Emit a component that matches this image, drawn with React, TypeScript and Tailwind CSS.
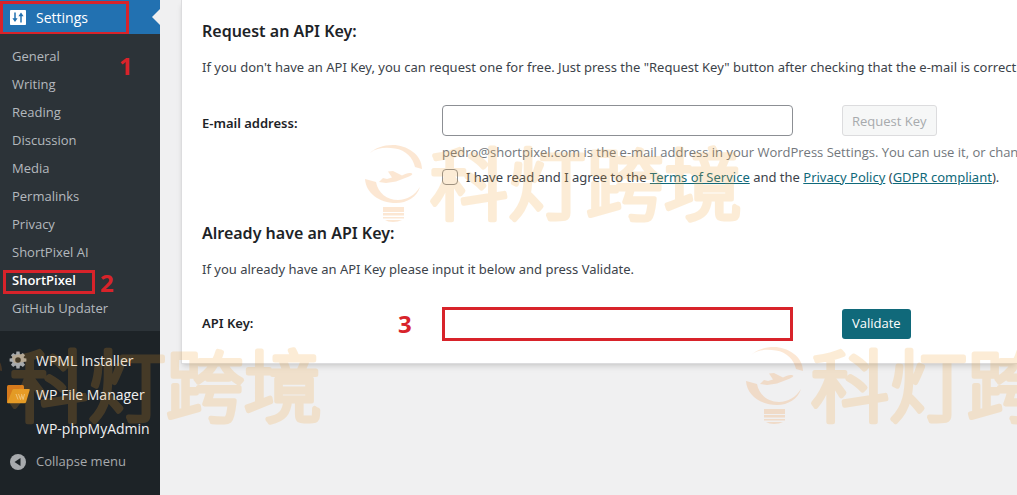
import React from "react";

const submenu = [
  "General",
  "Writing",
  "Reading",
  "Discussion",
  "Media",
  "Permalinks",
  "Privacy",
  "ShortPixel AI",
  "ShortPixel",
  "GitHub Updater",
];

function SlidersIcon() {
  return (
    <svg viewBox="0 0 16 15" className="h-[15px] w-4" aria-hidden="true">
      <rect width="16" height="15" rx="0.8" fill="#fff" />
      <path d="M5 2.500v8M11 12.500v-8" stroke="#2271b1" strokeWidth="1.500" />
      <path d="M2.400 8.200h5.200L5 12zM8.400 6.200h5.200L11 2.500z" fill="#2271b1" />
    </svg>
  );
}

function GearIcon() {
  const teeth = [0, 45, 90, 135, 180, 225, 270, 315];
  return (
    <svg viewBox="0 0 18 18" className="h-[18px] w-[18px]" aria-hidden="true">
      <g fill="#a7aaad">
        {teeth.map((angle) => (
          <path key={angle} d="M7.400 0.600h3.200l0.400 3.400h-4z" transform={`rotate(${angle} 9 9)`} />
        ))}
      </g>
      <circle cx="9" cy="9" r="4.500" fill="none" stroke="#a7aaad" strokeWidth="3.400" />
    </svg>
  );
}

function FolderIcon() {
  return (
    <svg viewBox="0 0 24 20" className="h-5 w-6" aria-hidden="true">
      <path d="M1 2.500Q1 1 2.500 1h14q1.500 0 1.500 1.500V14L2 19.300Q1 19.300 1 18z" fill="#d67a1c" />
      <path d="M8 5h15q1 0 .7 1l-3.600 12q-.4 1.300-1.700 1.300H2.500q-1.500 0-1-1.300L6.300 6.200Q6.700 5 8 5z" fill="#e39b25" />
      <path d="M10 10l2 5.500M12.500 10l2 5.500 1-4M15.500 10l1.600 5.500 1.400-5.500" fill="none" stroke="#f0cf90" strokeWidth="0.900" />
    </svg>
  );
}

function CollapseIcon() {
  return (
    <svg viewBox="0 0 16 16" className="h-4 w-4" aria-hidden="true">
      <circle cx="8" cy="8" r="8" fill="#a7aaad" />
      <path d="M10.500 4v8L4.500 8z" fill="#1d2327" />
    </svg>
  );
}

function Watermark() {
  return (
    <svg viewBox="-2 0 378 80" className="h-20 w-[378px] opacity-[0.19]" aria-hidden="true">
      <g fill="#f0831e">
        <path d="M4 9C9 4 17 1 27 1c13 0 29 9 29 24l-7-2C47 14 40 6 29 4.500 19 3 10 4 4 9z" />
        <path d="M-1 35l11 3c2 11 11 18 22 18 9 0 17-5 22-13-3 10-13 16-24 16C13 59 0 49-1 35z" />
        <path d="M17 34l4 1 5-1.500-4-6 5-.5 9 4.500c4-2 7-3 10-2 1 1-1 2-3 3l-13 5-10 1.500-7-1z" />
        <path d="M17 63h21v5H17zM17 69h21v2.500H17zM17 73h21v1.500H17zM19 76h17q-4 2-9 2t-8-2z" />
      </g>
      <text
        x="64"
        y="70"
        fontSize="78"
        fontWeight="300"
        fill="#f3a02c"
        stroke="#f3a02c"
        strokeWidth="5"
        strokeLinejoin="round"
        className="font-['Noto_Sans_CJK_SC',sans-serif]"
      >
        科灯跨境
      </text>
    </svg>
  );
}

function Sidebar() {
  const link = "flex h-[34px] items-center text-[14px] text-[#f0f0f1]";
  const slot = "flex w-9 shrink-0 items-center justify-center";
  return (
    <nav className="w-40 shrink-0 bg-[#1d2327] font-['Open_Sans',sans-serif]" aria-label="Admin menu">
      <a href="#settings" className="relative flex h-[34px] items-center bg-[#2271b1] text-[14px] text-white">
        <span className={slot}>
          <SlidersIcon />
        </span>
        Settings
        <span className="absolute right-0 top-[9px] h-4 w-2 bg-[#f0f0f1] [clip-path:polygon(100%_0,100%_100%,0_50%)]" />
        <span className="absolute left-0 top-px h-[34px] w-[129px] border-[3px] border-[#d8232a]" />
      </a>
      <div className="relative bg-[#2c3338] pb-2 pt-[9px]">
        <ul>
          {submenu.map((name) => {
            const current = name === "ShortPixel";
            return (
              <li key={name} className="relative">
                <a
                  href="#"
                  aria-current={current ? "page" : undefined}
                  className={
                    current
                      ? "flex h-7 items-center pl-3 text-[13px] font-semibold text-white"
                      : "flex h-7 items-center pl-3 text-[13px] text-[#b4b9be]"
                  }
                >
                  {name}
                </a>
                {current && (
                  <>
                    <span className="absolute left-[3px] top-[3px] h-6 w-[92px] border-[3px] border-[#d8232a]" />
                    <b className="absolute left-[100px] top-0 font-['Noto_Sans',sans-serif] text-[24px] leading-8 text-[#d8232a]">
                      2
                    </b>
                  </>
                )}
              </li>
            );
          })}
        </ul>
        <b className="absolute left-[119px] top-4 font-['Noto_Sans',sans-serif] text-[24px] leading-8 text-[#d8232a]">
          1
        </b>
      </div>
      <div className="pt-3">
        <a href="#wpml" className={link}>
          <span className={slot}>
            <GearIcon />
          </span>
          WPML Installer
        </a>
        <a href="#files" className={link}>
          <span className={slot}>
            <FolderIcon />
          </span>
          WP File Manager
        </a>
        <a href="#php" className={link}>
          <span className={slot} />
          WP-phpMyAdmin
        </a>
        <button type="button" className="flex h-[34px] items-center text-[13px] text-[#a7aaad]">
          <span className={slot}>
            <CollapseIcon />
          </span>
          Collapse menu
        </button>
      </div>
    </nav>
  );
}

export default function App() {
  const teal = "text-[#10697a] underline";
  return (
    <div className="relative flex min-h-screen overflow-hidden bg-[#f0f0f1] font-['Noto_Sans',sans-serif] text-[13px] text-[#3c434a]">
      <Sidebar />
      <main className="min-w-0 flex-1 overflow-hidden pl-[21px]">
        <section className="whitespace-nowrap border-b border-l border-[#dcdcde] bg-white pb-[22px] pl-5 pt-[18px] shadow-md">
          <h2 className="text-[16px] font-semibold leading-[26px] text-[#1d2327]">Request an API Key:</h2>
          <p className="pt-[13px] leading-5">
            If you don't have an API Key, you can request one for free. Just press the "Request Key" button after
            checking that the e-mail is correct.
          </p>
          <div className="flex pt-7">
            <label htmlFor="email" className="w-60 shrink-0 pt-2 font-semibold leading-5 text-[#1d2327]">
              E-mail address:
            </label>
            <div>
              <div className="flex gap-[49px]">
                <input
                  id="email"
                  type="email"
                  className="h-[31px] w-[351px] rounded border border-[#8c8f94] bg-white px-2"
                />
                <button
                  type="button"
                  disabled
                  className="h-[31px] rounded-[3px] border border-[#dcdcde] bg-[#f6f7f7] px-[9px] pt-0.5 font-['Open_Sans',sans-serif] text-[#a7aaad]"
                >
                  Request Key
                </button>
              </div>
              <p className="pt-1.5 font-['Open_Sans',sans-serif] leading-5 text-[#72777c]">
                <span className="font-medium">pedro@shortpixel.com</span> is the e-mail address in your WordPress
                Settings. You can use it, or change it to any valid e-mail address that you own.
              </p>
              <div className="flex items-center gap-2 pt-[5px]">
                <input
                  id="terms"
                  type="checkbox"
                  className="h-4 w-4 appearance-none rounded border border-[#8c8f94] bg-white"
                />
                <p className="leading-5">
                  <label htmlFor="terms">I have read and I agree to the </label>
                  <a href="#terms" className={teal}>
                    Terms of Service
                  </a>{" "}
                  and the{" "}
                  <a href="#privacy" className={teal}>
                    Privacy Policy
                  </a>{" "}
                  (
                  <a href="#gdpr" className={teal}>
                    GDPR compliant
                  </a>
                  ).
                </p>
              </div>
            </div>
          </div>
          <h2 className="pt-[33px] text-[16px] font-semibold leading-[26px] text-[#1d2327]">
            Already have an API Key:
          </h2>
          <p className="pt-[13px] leading-5">
            If you already have an API Key please input it below and press Validate.
          </p>
          <div className="flex items-center pt-7">
            <label htmlFor="api-key" className="w-[196px] shrink-0 font-semibold text-[#1d2327]">
              API Key:
            </label>
            <b className="w-11 text-[24px] leading-8 text-[#d8232a]">3</b>
            <input id="api-key" type="text" className="h-[34px] w-[351px] border-[3px] border-[#d8232a] bg-white px-2" />
            <button
              type="button"
              className="ml-[49px] h-[30px] rounded-[3px] bg-[#10697a] px-[10px] font-['Open_Sans',sans-serif] text-white"
            >
              Validate
            </button>
          </div>
        </section>
      </main>
      <div className="pointer-events-none absolute left-[364px] top-36">
        <Watermark />
      </div>
      <div className="pointer-events-none absolute -left-[56px] top-[346px]">
        <Watermark />
      </div>
      <div className="pointer-events-none absolute left-[745px] top-[346px]">
        <Watermark />
      </div>
    </div>
  );
}
